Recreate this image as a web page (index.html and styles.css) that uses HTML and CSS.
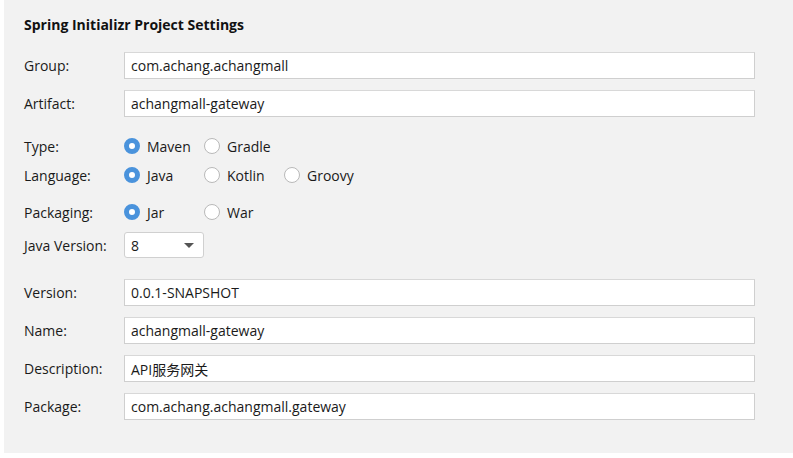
FILE: index.html
```html
<!DOCTYPE html>
<html>
<head>
<meta charset="utf-8">
<link rel="stylesheet" href="styles.css">
</head>
<body>
<div class="panel">
  <div class="title">Spring Initializr Project Settings</div>

  <div class="row field first">
    <div class="label">Group:</div>
    <div class="input">com.achang.achangmall</div>
  </div>
  <div class="row field">
    <div class="label">Artifact:</div>
    <div class="input">achangmall-gateway</div>
  </div>

  <div class="row radios type">
    <div class="label">Type:</div>
    <div class="opt"><span class="radio on"></span>Maven</div>
    <div class="opt"><span class="radio"></span>Gradle</div>
  </div>
  <div class="row radios lang">
    <div class="label">Language:</div>
    <div class="opt"><span class="radio on"></span>Java</div>
    <div class="opt"><span class="radio"></span>Kotlin</div>
    <div class="opt"><span class="radio"></span>Groovy</div>
  </div>
  <div class="row radios pack">
    <div class="label">Packaging:</div>
    <div class="opt"><span class="radio on"></span>Jar</div>
    <div class="opt"><span class="radio"></span>War</div>
  </div>

  <div class="row java">
    <div class="label">Java Version:</div>
    <div class="select"><span>8</span><span class="arrow"></span></div>
  </div>

  <div class="row field ver">
    <div class="label">Version:</div>
    <div class="input">0.0.1-SNAPSHOT</div>
  </div>
  <div class="row field">
    <div class="label">Name:</div>
    <div class="input">achangmall-gateway</div>
  </div>
  <div class="row field">
    <div class="label">Description:</div>
    <div class="input">API服务网关</div>
  </div>
  <div class="row field">
    <div class="label">Package:</div>
    <div class="input">com.achang.achangmall.gateway</div>
  </div>
</div>
</body>
</html>
```

FILE: styles.css
```css
html, body {
  margin: 0;
  padding: 0;
  background: #ffffff;
}
body {
  font-family: "Open Sans", "Noto Sans CJK SC", sans-serif;
  font-size: 14px;
  color: #1a1a1a;
}
.panel {
  margin-left: 4px;
  width: 789px;
  height: 453px;
  background: #f2f2f2;
  padding: 15px 0 0 20px;
  box-sizing: border-box;
  display: flex;
  flex-direction: column;
}
.title {
  font-weight: 700;
  font-size: 14px;
  line-height: 20px;
  height: 20px;
  color: #111;
}
.row {
  display: flex;
  align-items: center;
}
.label {
  width: 100px;
  flex: none;
}
.field {
  height: 27px;
  margin-top: 11px;
}
.field.first {
  margin-top: 17px;
}
.field.ver {
  margin-top: 21px;
}
.input {
  width: 631px;
  height: 27px;
  box-sizing: border-box;
  background: #fff;
  border: 1px solid #cfcfcf;
  border-top-color: #d8d8d8;
  padding-left: 6px;
  display: flex;
  align-items: center;
}
.radios {
  height: 22px;
}
.type { margin-top: 18px; }
.lang { margin-top: 7px; }
.pack { margin-top: 15px; }
.opt {
  width: 80px;
  display: flex;
  align-items: center;
}
.radio {
  width: 16px;
  height: 16px;
  box-sizing: border-box;
  border-radius: 50%;
  border: 1px solid #b9b9b9;
  background: #fff;
  margin-right: 7px;
  flex: none;
}
.radio.on {
  border: 5px solid #4a93dc;
  background: #fff;
}
.java {
  margin-top: 9px;
  height: 26px;
}
.select {
  width: 80px;
  height: 26px;
  box-sizing: border-box;
  background: #fff;
  border: 1px solid #d0d0d0;
  border-radius: 3px;
  padding: 0 9px 0 6px;
  display: flex;
  align-items: center;
  justify-content: space-between;
}
.arrow {
  width: 0;
  height: 0;
  border-left: 5px solid transparent;
  border-right: 5px solid transparent;
  border-top: 5px solid #555;
}
```
